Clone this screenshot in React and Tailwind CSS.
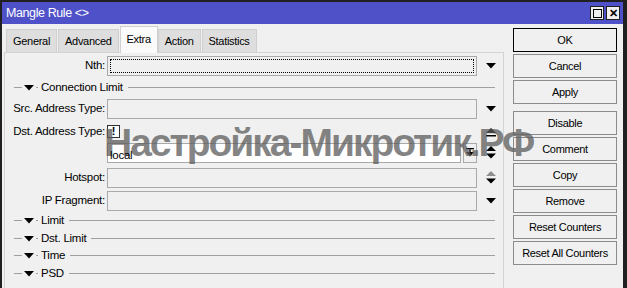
import React from 'react';

const tabs = ['General', 'Advanced', 'Extra', 'Action', 'Statistics'];

const buttons = [
  { label: 'OK', focus: true },
  { label: 'Cancel' },
  { label: 'Apply', gapAfter: true },
  { label: 'Disable' },
  { label: 'Comment' },
  { label: 'Copy' },
  { label: 'Remove' },
  { label: 'Reset Counters' },
  { label: 'Reset All Counters' },
];

function Down() {
  return (
    <svg width="10" height="6" viewBox="0 0 10 6">
      <polygon points="0,0 10,0 5,5.5" fill="#000" />
    </svg>
  );
}

function UpDown({ grayUp }) {
  return (
    <svg width="10" height="13" viewBox="0 0 10 13">
      <polygon points="5,0 10,5 0,5" fill={grayUp ? '#8f8f8f' : '#000'} />
      <polygon points="0,7.5 10,7.5 5,12.5" fill="#000" />
    </svg>
  );
}

function Up() {
  return (
    <svg width="10" height="13" viewBox="0 0 10 13">
      <polygon points="5,3 10,8 0,8" fill="#000" />
      <rect x="0" y="10" width="10" height="1.5" fill="#000" />
    </svg>
  );
}

function Field({ label, children, right }) {
  return (
    <div className="flex items-center h-[20px]">
      <div className="w-[102px] text-right pr-[2px] shrink-0">{label}</div>
      <div className="w-[370px] shrink-0 h-full">{children}</div>
      <div className="w-[26px] flex justify-center pl-[2px]">{right}</div>
    </div>
  );
}

function EmptyBox({ dotted }) {
  return (
    <div className="h-full border border-[#a9a9a9] bg-[#f0f0f0] p-[2px]">
      {dotted && <div className="h-full border border-dotted border-black" />}
    </div>
  );
}

function Section({ label }) {
  return (
    <div className="flex items-center h-[17.7px] pl-[9px] pr-[8px]">
      <div className="w-[8px] h-px bg-[#a0a0a0]" />
      <div className="mx-[2px] mt-[1px]">
        <svg width="10" height="6" viewBox="0 0 10 6">
          <polygon points="0,0 10,0 5,5.5" fill="#000" />
        </svg>
      </div>
      <div className="w-[2px] h-px bg-[#a0a0a0] mr-[3px]" />
      <span>{label}</span>
      <div className="flex-1 h-px bg-[#a0a0a0] ml-[5px]" />
    </div>
  );
}

export default function App() {
  return (
    <div className="relative w-[627px] h-[288px] overflow-hidden bg-[#f0f0f0] border-t-2 border-l-2 border-r-[4px] border-[#202020] text-[11.5px] tracking-[-0.25px] text-black font-['Liberation_Sans',Arial,sans-serif]">
      {/* title bar */}
      <div className="h-[22px] bg-[#4f51c9] flex items-center justify-between pl-[4px] pr-[3px]">
        <span className="text-white text-[12.5px] tracking-[-0.4px]">Mangle Rule &lt;&gt;</span>
        <div className="flex gap-[2px]">
          <div className="w-[14px] h-[14px] bg-[#f0f0f0] border border-[#202020] flex items-center justify-center">
            <div className="w-[9px] h-[9px] border border-black" />
          </div>
          <div className="w-[14px] h-[14px] bg-[#f0f0f0] border border-[#202020] flex items-center justify-center text-[11px] font-bold leading-none">
            ✕
          </div>
        </div>
      </div>

      <div className="flex">
        {/* left side */}
        <div className="w-[502px] shrink-0 pl-[2px]">
          <div className="flex items-end h-[28px] pl-[2px] text-[11px] tracking-[-0.3px]">
            {tabs.map((t) =>
              t === 'Extra' ? (
                <div
                  key={t}
                  className="h-[27px] px-[6px] bg-[#fafafa] border border-b-0 border-[#d0d0d0] flex items-center pb-[2px] -mb-px relative z-10"
                >
                  {t}
                </div>
              ) : (
                <div
                  key={t}
                  className="h-[23px] px-[6px] mr-[1px] bg-[#dedede] border border-b-0 border-[#cfcfcf] flex items-center"
                >
                  {t}
                </div>
              )
            )}
          </div>
          <div className="h-[238px] border-t border-l border-r border-[#d4d4d4] pt-[3px]">
            <Field label="Nth:" right={<Down />}>
              <EmptyBox dotted />
            </Field>
            <div className="mt-[3px]">
              <Section label="Connection Limit" />
            </div>
            <div className="mt-[2px] flex flex-col gap-[6px]">
              <Field label="Src. Address Type:" right={<Down />}>
                <EmptyBox />
              </Field>
              <div className="flex items-center h-[14px]">
                <div className="w-[102px] text-right pr-[2px] shrink-0">Dst. Address Type:</div>
                <div className="w-[370px] shrink-0">
                  <div className="w-[13px] h-[13px] border border-[#303030] bg-white flex items-center justify-center font-bold text-[11px] leading-none">
                    !
                  </div>
                </div>
                <div className="w-[26px] flex justify-center pl-[2px]">
                  <Up />
                </div>
              </div>
            </div>
            <div className="mt-[4px]">
              <Field label="" right={<UpDown />}>
                <div className="flex h-full gap-[2px]">
                  <div className="flex-1 border border-[#a9a9a9] bg-white pl-[2px] pt-[3px]">
                    <span className="relative z-20">local</span>
                  </div>
                  <div className="w-[14px] border border-[#a9a9a9] bg-[#f0f0f0] flex items-center justify-center">
                    <svg width="8" height="9" viewBox="0 0 8 9">
                      <rect x="0" y="0" width="8" height="1.3" fill="#000" />
                      <rect x="3.3" y="1.3" width="1.4" height="3" fill="#000" />
                      <polygon points="0,4 8,4 4,8.5" fill="#000" />
                    </svg>
                  </div>
                </div>
              </Field>
            </div>
            <div className="mt-[5px] flex flex-col gap-[3px]">
              <Field label="Hotspot:" right={<UpDown grayUp />}>
                <EmptyBox />
              </Field>
              <Field label="IP Fragment:" right={<Down />}>
                <EmptyBox />
              </Field>
            </div>
            <div className="mt-[1px]">
              <Section label="Limit" />
              <Section label="Dst. Limit" />
              <Section label="Time" />
              <Section label="PSD" />
            </div>
          </div>
        </div>

        {/* right buttons */}
        <div className="ml-[9px] w-[104px] pt-[4px] flex flex-col">
          {buttons.map((b) => (
            <div
              key={b.label}
              className={`h-[24px] flex items-center justify-center bg-[#f0f0f0] border ${
                b.focus ? 'border-black border-[1.5px]' : 'border-[#8c8c8c]'
              } ${b.gapAfter ? 'mb-[7px]' : 'mb-[2px]'} text-[11px] tracking-[-0.3px]`}
            >
              {b.label}
            </div>
          ))}
        </div>
      </div>

      {/* watermark */}
      <div className="absolute left-[102px] top-[121px] z-10 text-[39px] font-bold tracking-[-2px] text-[#5c5c5c]/75 leading-none pointer-events-none whitespace-nowrap font-['Liberation_Sans',Arial,sans-serif]">
        Настройка-Микротик.РФ
      </div>
    </div>
  );
}
